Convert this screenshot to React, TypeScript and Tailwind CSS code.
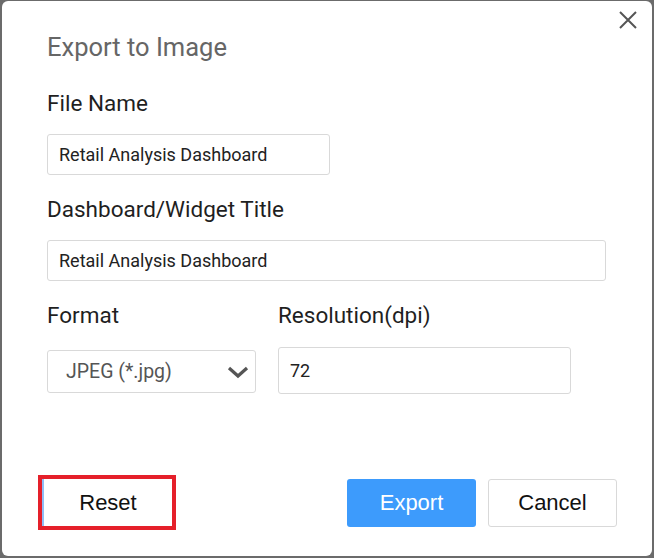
const labelCls =
  "h-[24px] text-[22.5px] leading-[24px] text-[#1f1f1f] font-['Roboto',sans-serif]";
const inputCls =
  "h-[41px] rounded-[3px] border border-[#d9d9d9] bg-white px-[11px] text-[18px] text-[#222] font-['Roboto',sans-serif] outline-none";

const App = () => {
  return (
    <div className="w-[654px] h-[558px] bg-[#6b6b6b] pt-[1px] pl-[2px] pr-[2px] pb-[2px]">
      <div className="relative flex flex-col w-full h-full bg-white rounded-[6px]">
        {/* close */}
        <button className="absolute top-[9px] right-[14px] w-[20px] h-[20px] flex items-center justify-center">
          <svg width="18" height="18" viewBox="0 0 18 18">
            <path d="M1 1L17 17M17 1L1 17" stroke="#555" strokeWidth="2" />
          </svg>
        </button>

        {/* form */}
        <div className="flex flex-col pl-[45px] pt-[32px]">
          <h2 className="h-[28px] text-[25.5px] leading-[28px] text-[#666] font-['Roboto',sans-serif]">
            Export to Image
          </h2>

          <label className={`${labelCls} mt-[30px]`}>File Name</label>
          <input
            className={`${inputCls} w-[283px] mt-[19px]`}
            defaultValue="Retail Analysis Dashboard"
          />

          <label className={`${labelCls} mt-[22px]`}>Dashboard/Widget Title</label>
          <input
            className={`${inputCls} w-[559px] mt-[19px]`}
            defaultValue="Retail Analysis Dashboard"
          />

          <div className="flex flex-row gap-[22px] mt-[22px]">
            <div className="flex flex-col w-[209px]">
              <label className={labelCls}>Format</label>
              <div className="mt-[23px] h-[43px] flex items-center justify-between rounded-[3px] border border-[#d9d9d9] pl-[18px] pr-[6px]">
                <span className="text-[19.5px] text-[#555] font-['Roboto',sans-serif]">
                  JPEG (*.jpg)
                </span>
                <svg width="22" height="14" viewBox="0 0 22 14">
                  <path
                    d="M2 3L11 11L20 3"
                    stroke="#555"
                    strokeWidth="3.2"
                    fill="none"
                  />
                </svg>
              </div>
            </div>
            <div className="flex flex-col">
              <label className={labelCls}>Resolution(dpi)</label>
              <input
                className={`${inputCls} w-[293px] h-[47px] mt-[20px]`}
                defaultValue="72"
              />
            </div>
          </div>
        </div>

        {/* footer */}
        <div className="flex flex-row items-center justify-between pl-[36px] pr-[35px] mt-[81px]">
          <div className="w-[138px] h-[55px] border-[4px] border-[#e5202a]">
            <button className="w-full h-full bg-white border-l-[2px] border-[#8fbef7] text-[22px] text-[#111] font-['Liberation_Sans',Arial,sans-serif]">
              Reset
            </button>
          </div>
          <div className="flex flex-row gap-[12px]">
            <button className="w-[129px] h-[48px] rounded-[3px] bg-[#3d9bfc] text-white text-[22px] font-['Liberation_Sans',Arial,sans-serif]">
              Export
            </button>
            <button className="w-[129px] h-[48px] rounded-[3px] border border-[#d9d9d9] bg-white text-[#111] text-[22px] font-['Liberation_Sans',Arial,sans-serif]">
              Cancel
            </button>
          </div>
        </div>
      </div>
    </div>
  );
};

export default App;
